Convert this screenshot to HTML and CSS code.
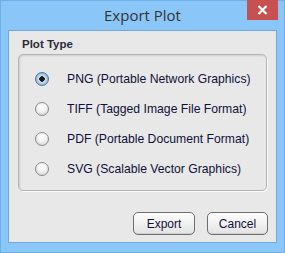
FILE: index.html
```html
<!DOCTYPE html>
<html lang="en">
<head>
  <meta charset="UTF-8">
  <title>Export Plot</title>
  <link rel="stylesheet" href="styles.css">
</head>
<body>

<div class="window">
  <div class="titlebar">
    <span></span>
    <span class="title">Export Plot</span>
    <button class="close-btn">
      <svg width="11" height="10" viewBox="0 0 11 10"><path d="M1.5 1 L9.5 9 M9.5 1 L1.5 9" stroke="#fff" stroke-width="2.2"/></svg>
    </button>
  </div>

  <div class="client">
    <div class="group-label">Plot Type</div>
    <div class="group-panel">
      <label class="radio-row"><span class="radio checked"></span>PNG (Portable Network Graphics)</label>
      <label class="radio-row"><span class="radio"></span>TIFF (Tagged Image File Format)</label>
      <label class="radio-row"><span class="radio"></span>PDF (Portable Document Format)</label>
      <label class="radio-row"><span class="radio"></span>SVG (Scalable Vector Graphics)</label>
    </div>
    <div class="button-row">
      <button class="btn btn-export">Export</button>
      <button class="btn btn-cancel">Cancel</button>
    </div>
  </div>
</div>

</body>
</html>
```

FILE: styles.css
```css
body {
  margin: 0;
  padding: 0;
  font-family: "Liberation Sans", Arial, sans-serif;
}

.window {
  width: 285px;
  height: 253px;
  box-sizing: border-box;
  background-color: #8bc6f8;
  border: 1px solid #6fb0ea;
}

.titlebar {
  display: grid;
  grid-template-columns: 1fr auto 1fr;
  height: 29px;
}

.title {
  font-family: "Open Sans", "DejaVu Sans", sans-serif;
  font-size: 15px;
  color: #333;
  line-height: 28px;
}

.close-btn {
  justify-self: end;
  align-self: start;
  width: 31px;
  height: 20px;
  margin: -1px 6px 0 0;
  padding: 0;
  border: none;
  background-color: #c75050;
  display: flex;
  align-items: center;
  justify-content: center;
}

.client {
  margin: 0 7px 0 7px;
  height: 213px;
  box-sizing: border-box;
  background-color: #e8e8e8;
  border: 1px solid #71a7dc;
  padding: 6px 9px 0 9px;
}

.group-label {
  font-size: 11.5px;
  font-weight: bold;
  line-height: 15px;
  color: #2b2b3a;
  padding-left: 4px;
  margin-bottom: 2px;
}

.group-panel {
  height: 137px;
  box-sizing: border-box;
  border: 1px solid #b4b4b4;
  border-radius: 5px;
  box-shadow: inset 1px 1px 2px rgba(0, 0, 0, 0.12), 1px 1px 0 #fafafa;
  padding: 9px 0 0 16px;
}

.radio-row {
  display: flex;
  align-items: center;
  height: 30px;
  font-size: 12.2px;
  color: #10103a;
}

.radio {
  width: 14px;
  height: 14px;
  box-sizing: border-box;
  border-radius: 50%;
  border: 1px solid #8a8a8a;
  background: radial-gradient(circle at 50% 35%, #ffffff 0%, #f2f2f2 45%, #c8c8c8 100%);
  margin-right: 18px;
  flex-shrink: 0;
}

.radio.checked {
  border: 1px solid #4a79a8;
  background: radial-gradient(circle, #1c1c1c 0 2.5px, #dde6ef 3px, #a9c6e3 5px, #6f9dcc 7px);
}

.button-row {
  display: flex;
  justify-content: flex-end;
  gap: 12px;
  margin-top: 21px;
  margin-right: -1px;
}

.btn {
  height: 23px;
  padding: 0;
  font-family: "Liberation Sans", Arial, sans-serif;
  font-size: 12px;
  color: #10103a;
  border: 1px solid #6e6e6e;
  border-radius: 5px;
  background: linear-gradient(#fdfdfd, #f1f1f1 50%, #e2e2e2);
  box-shadow: inset 0 -1px 0 #cfcfcf;
}

.btn-export {
  width: 62px;
}

.btn-cancel {
  width: 61px;
}
```
